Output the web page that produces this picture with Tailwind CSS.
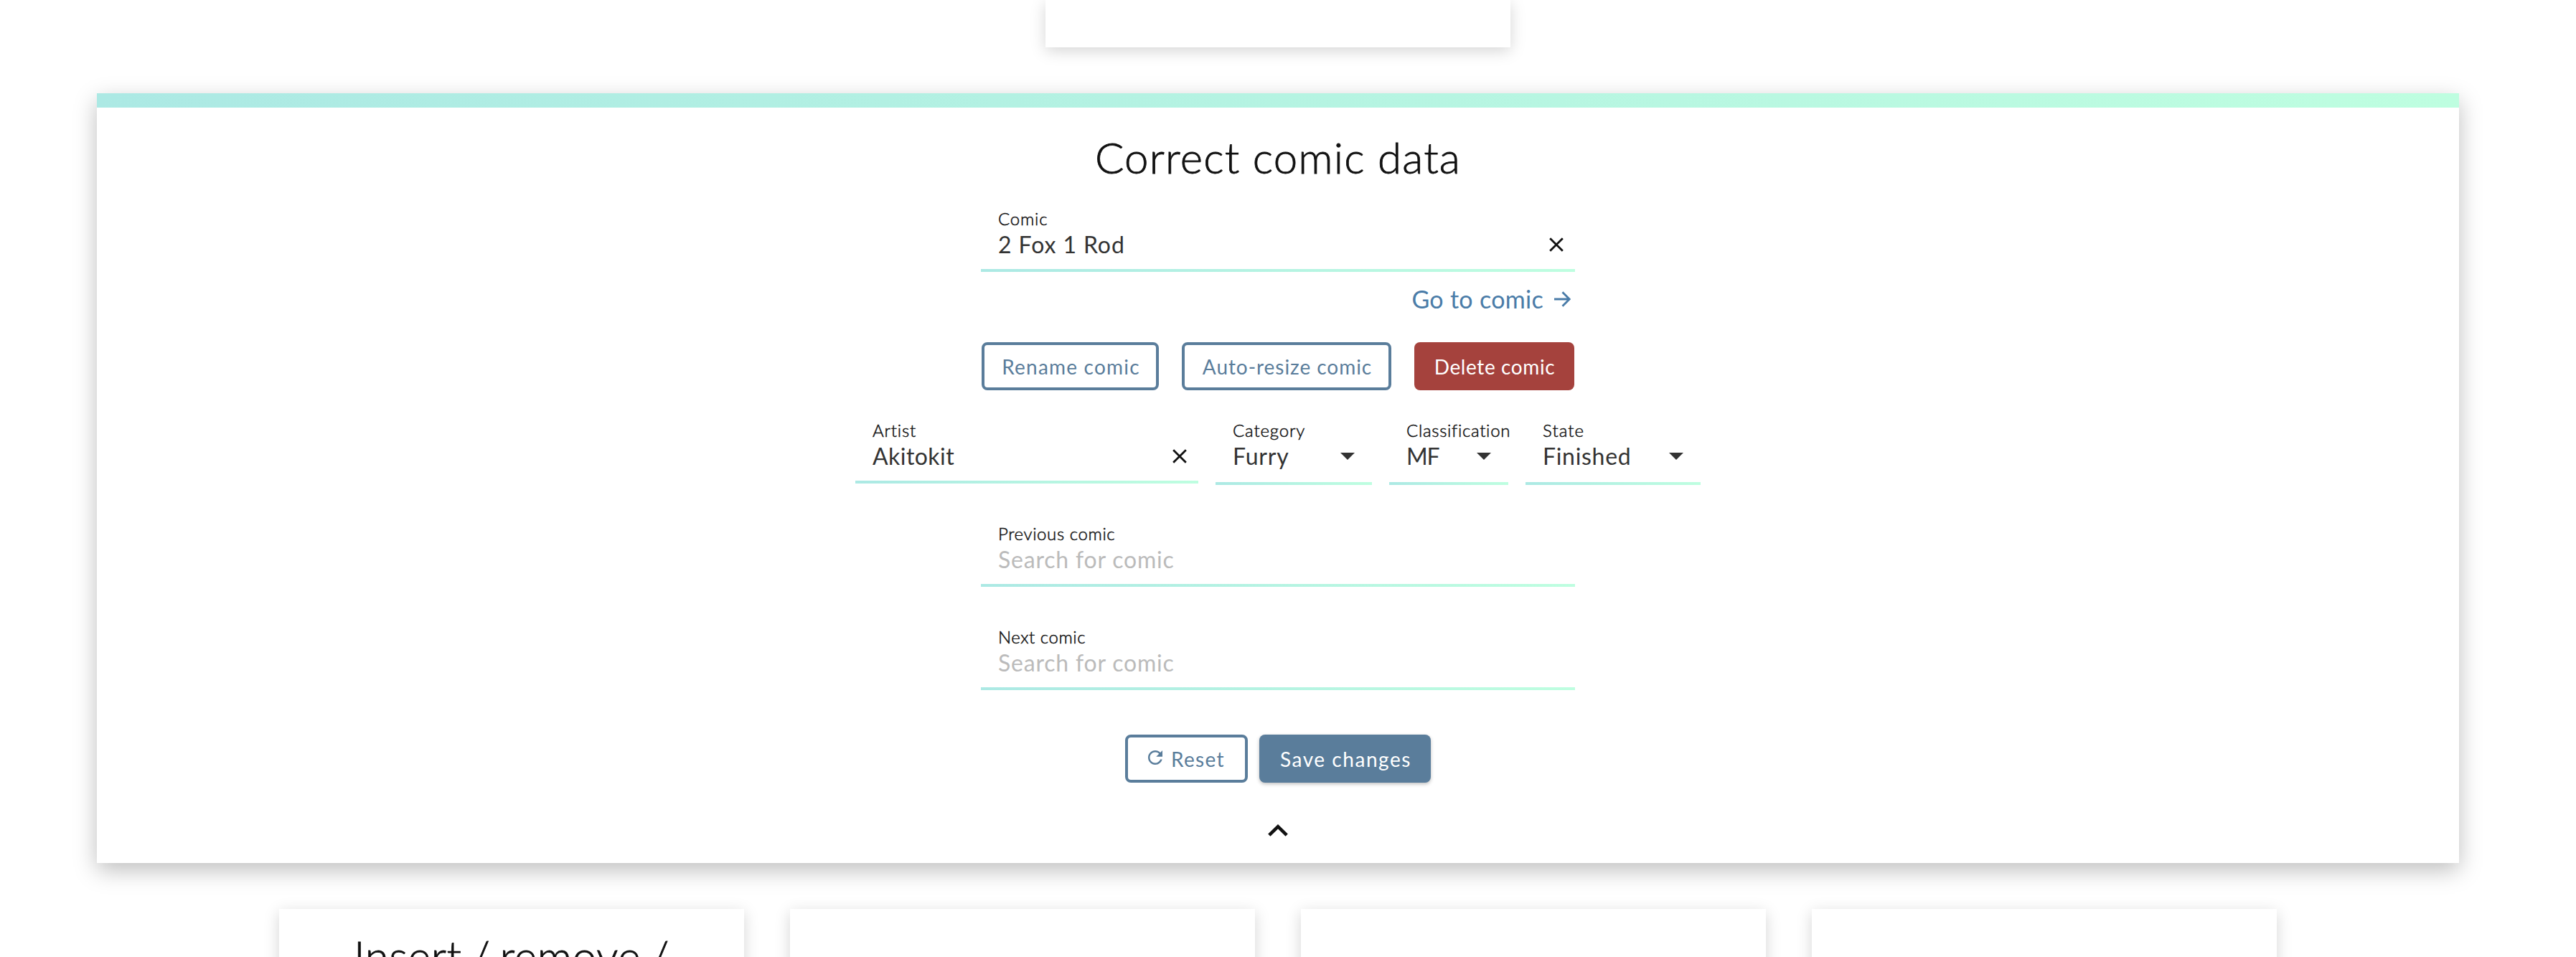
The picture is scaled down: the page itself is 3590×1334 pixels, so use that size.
<!DOCTYPE html>
<html lang="en">
<head>
<meta charset="utf-8">
<title>Correct comic data</title>
<script src="https://cdn.jsdelivr.net/npm/@tailwindcss/browser@4"></script>
</head>
<body class="h-[1334px] overflow-hidden bg-white font-['Lato',sans-serif] text-[#111]">
<main class="flex h-[1334px] w-[3562px] flex-col items-center overflow-hidden">
  <div class="h-[66px] w-[648px] shrink-0 bg-white shadow-[0_5px_20px_rgba(0,0,0,0.17)]"></div>

  <section class="mt-16 flex h-[1073px] w-[3292px] shrink-0 flex-col items-center bg-white shadow-[0_10px_30px_rgba(0,0,0,0.26)]">
    <div class="h-5 w-full shrink-0 bg-linear-to-r/srgb from-[#ace9e4] to-[#befee0]"></div>
    <h1 class="mt-[33px] text-[60px] leading-[72px] font-light tracking-[1.15px] whitespace-nowrap [-webkit-text-stroke:0.8px_#111]">Correct comic data</h1>

    <div class="mt-[38px] flex w-[828px] flex-col">
      <label class="pl-6 text-[24px] leading-6 font-light tracking-[0.8px] [-webkit-text-stroke:0.5px_#111]">Comic</label>
      <div class="mt-1 flex h-10 items-center justify-between pr-4 pl-6">
        <span class="text-[32px] leading-10 tracking-[0.9px] text-[#333]">2 Fox 1 Rod</span>
        <svg class="size-5" viewBox="0 0 20 20" fill="none" stroke="#111" stroke-width="2.8"><path d="M1.2 1.2 18.8 18.8M18.8 1.2 1.2 18.8"/></svg>
      </div>
      <div class="mt-3.5 h-1 bg-linear-to-r/srgb from-[#ace9e4] to-[#befee0]"></div>
    </div>

    <div class="mt-[18px] flex h-10 w-[828px] items-center justify-end pr-[6px] text-[#4a7ca8]">
      <span class="text-[34px] leading-10 tracking-[0.3px]">Go to comic</span>
      <svg class="ml-[15px] h-[22px] w-[23px]" viewBox="0 0 23 22" fill="none" stroke="currentColor" stroke-width="2.8"><path d="M0 11H21M11.5 1.2 21.2 11 11.5 20.8"/></svg>
    </div>

    <div class="mt-10 flex h-[67px] w-[828px] items-stretch justify-between px-px text-[28px] text-[#5a7d9b]">
      <button class="w-[247px] rounded-lg border-4 border-[#5a7d9b] pl-0.5 tracking-[1.2px] whitespace-nowrap">Rename comic</button>
      <button class="w-[292px] rounded-lg border-4 border-[#5a7d9b] pl-0.5 tracking-[0.95px] whitespace-nowrap">Auto-resize comic</button>
      <button class="w-[223px] rounded-lg bg-[#a5423d] pl-px tracking-[0.6px] whitespace-nowrap text-white">Delete comic</button>
    </div>

    <div class="mt-11 flex h-[88px] w-[1178px] items-start justify-between">
      <div class="flex w-[478px] flex-col">
        <label class="pl-6 text-[24px] leading-6 font-light tracking-[0.8px] [-webkit-text-stroke:0.5px_#111]">Artist</label>
        <div class="mt-1 flex h-10 items-center justify-between pr-4 pl-6">
          <span class="text-[32px] leading-10 tracking-[0.45px] text-[#333]">Akitokit</span>
          <svg class="size-5" viewBox="0 0 20 20" fill="none" stroke="#111" stroke-width="2.8"><path d="M1.2 1.2 18.8 18.8M18.8 1.2 1.2 18.8"/></svg>
        </div>
        <div class="mt-3.5 h-1 bg-linear-to-r/srgb from-[#ace9e4] to-[#befee0]"></div>
      </div>
      <div class="flex w-[218px] flex-col">
        <label class="pl-6 text-[24px] leading-6 font-light tracking-[0.85px] [-webkit-text-stroke:0.5px_#111]">Category</label>
        <div class="mt-1 flex h-10 items-center justify-between pr-6 pl-6">
          <span class="text-[32px] leading-10 tracking-[0.8px] text-[#333]">Furry</span>
          <svg class="h-2.5 w-5" viewBox="0 0 20 10" fill="#333"><path d="M0 0H20L10 10Z"/></svg>
        </div>
        <div class="mt-4 h-1 bg-linear-to-r/srgb from-[#ace9e4] to-[#befee0]"></div>
      </div>
      <div class="flex w-[166px] flex-col">
        <label class="pl-6 text-[24px] leading-6 font-light tracking-[0.7px] whitespace-nowrap [-webkit-text-stroke:0.5px_#111]">Classification</label>
        <div class="mt-1 flex h-10 items-center justify-between pr-6 pl-6">
          <span class="text-[32px] leading-10 tracking-[-1.2px] text-[#333]">MF</span>
          <svg class="h-2.5 w-5" viewBox="0 0 20 10" fill="#333"><path d="M0 0H20L10 10Z"/></svg>
        </div>
        <div class="mt-4 h-1 bg-linear-to-r/srgb from-[#ace9e4] to-[#befee0]"></div>
      </div>
      <div class="flex w-[244px] flex-col">
        <label class="pl-6 text-[24px] leading-6 font-light tracking-[1.1px] [-webkit-text-stroke:0.5px_#111]">State</label>
        <div class="mt-1 flex h-10 items-center justify-between pr-6 pl-6">
          <span class="text-[32px] leading-10 tracking-[0.7px] text-[#333]">Finished</span>
          <svg class="h-2.5 w-5" viewBox="0 0 20 10" fill="#333"><path d="M0 0H20L10 10Z"/></svg>
        </div>
        <div class="mt-4 h-1 bg-linear-to-r/srgb from-[#ace9e4] to-[#befee0]"></div>
      </div>
    </div>

    <div class="mt-14 flex w-[828px] flex-col">
      <label class="pl-6 text-[24px] leading-6 font-light tracking-[0.6px] [-webkit-text-stroke:0.5px_#111]">Previous comic</label>
      <span class="mt-1 h-10 pl-6 text-[32px] leading-10 tracking-[0.8px] text-[#bbb]">Search for comic</span>
      <div class="mt-3.5 h-1 bg-linear-to-r/srgb from-[#ace9e4] to-[#befee0]"></div>
    </div>

    <div class="mt-[58px] flex w-[828px] flex-col">
      <label class="pl-6 text-[24px] leading-6 font-light tracking-[0.55px] [-webkit-text-stroke:0.5px_#111]">Next comic</label>
      <span class="mt-1 h-10 pl-6 text-[32px] leading-10 tracking-[0.8px] text-[#bbb]">Search for comic</span>
      <div class="mt-3.5 h-1 bg-linear-to-r/srgb from-[#ace9e4] to-[#befee0]"></div>
    </div>

    <div class="mt-[62px] flex h-[67px] items-stretch gap-4 text-[28px]">
      <button class="flex w-[171px] items-center rounded-lg border-4 border-[#5a7d9b] pl-7 tracking-[1.3px] text-[#5a7d9b]">
        <svg class="mr-3 mb-[3px] size-5 shrink-0" viewBox="4 4 16 16" fill="currentColor" stroke="none"><path d="M17.65 6.35C16.2 4.9 14.21 4 12 4c-4.42 0-7.99 3.58-7.99 8s3.57 8 7.99 8c3.73 0 6.84-2.55 7.73-6h-2.08c-.82 2.33-3.04 4-5.65 4-3.31 0-6-2.69-6-6s2.69-6 6-6c1.66 0 3.14.69 4.22 1.78L13 11h7V4l-2.35 2.35z"/></svg>
        Reset
      </button>
      <button class="w-[239px] rounded-lg bg-[#5a7d9b] pl-0.5 tracking-[1.55px] whitespace-nowrap text-white shadow-[0_2px_5px_rgba(0,0,0,0.25)]">Save changes</button>
    </div>

    <svg class="mt-[58px] h-[17px] w-7" viewBox="0 0 28 17" fill="none" stroke="#111" stroke-width="4.6"><path d="M1.8 15.2 14 3.2 26.2 15.2"/></svg>
  </section>

  <div class="mt-16 flex shrink-0 gap-16">
    <div class="h-[300px] w-[648px] bg-white pt-[29px] text-center shadow-[0_5px_20px_rgba(0,0,0,0.17)]">
      <h2 class="text-[60px] leading-[72px] font-light tracking-[0.7px] whitespace-nowrap [word-spacing:-4px] [-webkit-text-stroke:0.8px_#111]">Insert / remove /</h2>
    </div>
    <div class="h-[300px] w-[648px] bg-white shadow-[0_5px_20px_rgba(0,0,0,0.17)]"></div>
    <div class="h-[300px] w-[648px] bg-white shadow-[0_5px_20px_rgba(0,0,0,0.17)]"></div>
    <div class="h-[300px] w-[648px] bg-white shadow-[0_5px_20px_rgba(0,0,0,0.17)]"></div>
  </div>
</main>
</body>
</html>
